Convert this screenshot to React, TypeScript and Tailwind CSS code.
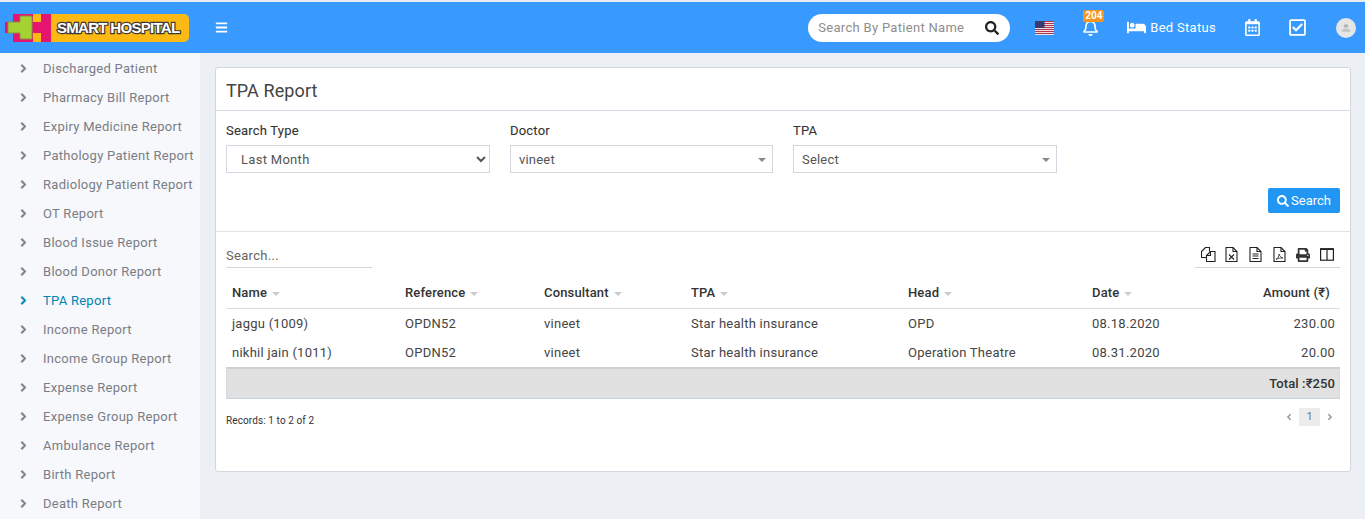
import { FaAngleLeft, FaAngleRight, FaBars, FaBed, FaChevronRight, FaPrint, FaRegBell, FaRegCalendarAlt, FaRegCheckSquare, FaSearch } from 'react-icons/fa';

const reports = [
  'Discharged Patient',
  'Pharmacy Bill Report',
  'Expiry Medicine Report',
  'Pathology Patient Report',
  'Radiology Patient Report',
  'OT Report',
  'Blood Issue Report',
  'Blood Donor Report',
  'TPA Report',
  'Income Report',
  'Income Group Report',
  'Expense Report',
  'Expense Group Report',
  'Ambulance Report',
  'Birth Report',
  'Death Report',
];

const columns = [
  { label: 'Name', width: 'w-[173px]' },
  { label: 'Reference', width: 'w-[139px]' },
  { label: 'Consultant', width: 'w-[147px]' },
  { label: 'TPA', width: 'w-[217px]' },
  { label: 'Head', width: 'w-[184px]' },
  { label: 'Date', width: 'w-[120px]' },
];

const rows = [
  ['jaggu (1009)', 'OPDN52', 'vineet', 'Star health insurance', 'OPD', '08.18.2020', '230.00'],
  ['nikhil jain (1011)', 'OPDN52', 'vineet', 'Star health insurance', 'Operation Theatre', '08.31.2020', '20.00'],
];

function DocIcon({ children }: { children?: React.ReactNode }) {
  return (
    <svg width="13" height="15" viewBox="0 0 13 15" fill="none" stroke="#222" strokeWidth="1.100">
      <path d="M1 .5h7l4 4v10H1z" />
      <path d="M8 .5v4h4" />
      {children}
    </svg>
  );
}

function CopyIcon() {
  return (
    <svg width="15" height="15" viewBox="0 0 15 15" fill="none" stroke="#222" strokeWidth="1.100">
      <path d="M4.500 .5h4v4M4.500 .5l-4 4v6h5" />
      <path d="M5.500 8.500l4-4h4.500v10h-8.500z" />
      <path d="M9.500 4.500v4h-4" />
    </svg>
  );
}

function ColumnsIcon() {
  return (
    <svg width="14" height="13" viewBox="0 0 14 13" fill="none" stroke="#222" strokeWidth="1.200">
      <rect x=".6" y=".8" width="12.800" height="11.400" />
      <path d="M7 1v11" />
      <path d="M.6 1.200h12.800" strokeWidth="1.600" />
    </svg>
  );
}

const toolbar = [
  <CopyIcon key="copy" />,
  <DocIcon key="excel">
    <path d="M4 7.500l5 5M9 7.500l-5 5" />
  </DocIcon>,
  <DocIcon key="csv">
    <path d="M3.500 7h6M3.500 9h6M3.500 11.500h6" />
  </DocIcon>,
  <DocIcon key="pdf">
    <path d="M3 12.500c2-1 3-3.500 3-5.500 .5 2 2 3.500 4 4-2.500-.2-5 .3-7 1.500z" strokeWidth=".8" />
  </DocIcon>,
  <FaPrint key="print" className="text-[14px] text-[#333]" />,
  <ColumnsIcon key="columns" />,
];

function Logo() {
  return (
    <div className="flex h-[28px] w-[184px] items-center">
      <svg width="46" height="28" viewBox="0 0 46 28" className="shrink-0">
        <rect x="8" y="0" width="38" height="28" fill="#e5146f" />
        <rect x="0" y="8" width="8" height="11" fill="#e5146f" />
        <path d="M15 2h12v23H15v-6H3V8h12z" fill="#a4d233" stroke="#8a8f3a" strokeWidth="1" />
        <rect x="28" y="0" width="8" height="8" fill="#fdb913" />
        <rect x="28" y="19" width="8" height="9" fill="#fdb913" />
      </svg>
      <div className="flex h-[28px] flex-1 items-center rounded-r-[5px] bg-[#fdb913] pl-[6px] text-[15px] font-bold leading-none tracking-[-0.7px] whitespace-nowrap text-white [font-family:'Liberation_Sans',sans-serif] [-webkit-text-stroke:2.4px_#3a3a3a] [paint-order:stroke_fill]">
        SMART HOSPITAL
      </div>
    </div>
  );
}

function Flag() {
  return (
    <svg width="19" height="14" viewBox="0 0 19 14">
      <rect width="19" height="14" fill="#f4f4f8" />
      {[0, 2, 4, 6, 8, 10, 12].map((y) => (
        <rect key={y} y={y} width="19" height="1.100" fill="#b4354a" />
      ))}
      <rect width="9.500" height="7" fill="#3a3a6e" />
    </svg>
  );
}

function Caret({ className }: { className: string }) {
  return <span className={`inline-block h-0 w-0 border-x-[4px] border-t-[4px] border-x-transparent ${className}`} />;
}

function Select2({ value, width }: { value: string; width: string }) {
  return (
    <div className={`flex h-[28px] ${width} items-center justify-between border border-[#d2d6de] bg-white pt-[1px] pr-[6px] pl-[8px] text-[13px] tracking-[0.2px] text-[#555]`}>
      {value}
      <Caret className="border-t-[#888]" />
    </div>
  );
}

export default function App() {
  return (
    <div className="h-[519px] overflow-hidden bg-[#ecf0f5] text-[13px] text-[#444] [font-family:Roboto,sans-serif]">
      <div className="h-[2px] bg-[#e8ecf2]" />

      {/* Header */}
      <header className="flex h-[51px] items-center bg-[#3899ff] text-white">
        <div className="ml-[5px] w-[210px]">
          <Logo />
        </div>
        <FaBars className="text-[13px]" />
        <div className="ml-auto flex items-center">
          <div className="flex h-[28px] w-[202px] items-center justify-between rounded-full bg-white pr-[11px] pl-[10px]">
            <span className="text-[13px] tracking-[0.3px] text-[#8e8e8e]">Search By Patient Name</span>
            <FaSearch className="text-[14px] text-[#222]" />
          </div>
          <div className="ml-[25px]">
            <Flag />
          </div>
          <div className="relative ml-[28px]">
            <FaRegBell className="text-[17px]" />
            <span className="absolute top-[-9px] left-[1px] rounded-[2px] bg-[#f7941d] px-[2px] text-[10px] leading-[12px] font-bold">204</span>
          </div>
          <div className="ml-[28px] flex items-center gap-[4px]">
            <FaBed className="text-[19px]" />
            <span className="text-[13px] tracking-[0.3px]">Bed Status</span>
          </div>
          <FaRegCalendarAlt className="ml-[28px] text-[17px]" />
          <FaRegCheckSquare className="ml-[27px] text-[19px]" />
          <div className="mr-[9px] ml-[29px] flex h-[20px] w-[20px] items-center justify-center rounded-full bg-[#e6e6e6]">
            <svg width="12" height="12" viewBox="0 0 11 11">
              <path d="M3.500 5V3l2-1.500 2 1.500v2z" fill="#b5b5b5" />
              <path d="M1 9c1-2 2.500-3 4.500-3s3.500 1 4.500 3z" fill="#c4c4c4" />
            </svg>
          </div>
        </div>
      </header>

      <div className="flex">
        {/* Sidebar */}
        <aside className="h-[466px] w-[200px] shrink-0 bg-[#f7f8fb]">
          <ul className="pt-[1px]">
            {reports.map((item) => (
              <li
                key={item}
                className={`flex h-[29px] items-center whitespace-nowrap ${item === 'TPA Report' ? 'text-[#0084b4]' : 'text-[#7a7d85]'}`}
              >
                <FaChevronRight className="ml-[19px] w-[9px] text-[9px]" stroke="currentColor" strokeWidth={50} />
                <span className="ml-[15px] tracking-[0.28px]">{item}</span>
              </li>
            ))}
          </ul>
        </aside>

        {/* Main */}
        <main className="flex-1 pt-[14px] pr-[14px] pl-[15px]">
          <section className="h-[405px] rounded-[3px] border border-[#d2d6de] bg-white">
            <div className="flex h-[43px] items-center border-b border-[#d2dbe4] px-[10px] pt-[2px]">
              <h1 className="text-[18px] tracking-[0.1px] text-[#444]">TPA Report</h1>
            </div>

            <div className="border-b border-[#e3e3e3] px-[10px] pt-[12px]">
              <div className="flex gap-[20px]">
                <div>
                  <label className="mb-[6px] block leading-[16px] tracking-[0.2px] text-[#333] [-webkit-text-stroke:0.1px_#333]">Search Type</label>
                  <select className="h-[28px] w-[264px] border border-[#d2d6de] bg-white pl-[10px] text-[13px] tracking-[0.3px] text-[#555]" defaultValue="Last Month">
                    <option>Last Month</option>
                  </select>
                </div>
                <div>
                  <label className="mb-[6px] block leading-[16px] tracking-[0.2px] text-[#333] [-webkit-text-stroke:0.1px_#333]">Doctor</label>
                  <Select2 value="vineet" width="w-[263px]" />
                </div>
                <div>
                  <label className="mb-[6px] block leading-[16px] tracking-[0.2px] text-[#333] [-webkit-text-stroke:0.1px_#333]">TPA</label>
                  <Select2 value="Select" width="w-[264px]" />
                </div>
              </div>
              <div className="mt-[15px] flex justify-end pb-[18px]">
                <button className="flex h-[25px] w-[72px] items-center justify-center gap-[2px] rounded-[2px] bg-[#2196f3] text-[13px] text-white">
                  <FaSearch className="text-[12px]" />
                  Search
                </button>
              </div>
            </div>

            <div className="px-[10px]">
              <div className="flex h-[36px] items-end justify-between">
                <div className="w-[146px] border-b border-[#d5d5d5] pb-[2px] text-[13px] tracking-[0.3px] text-[#666]">Search...</div>
                <div className="flex w-[145px] items-center justify-end border-b border-[#d5d5d5] pr-[1px] pb-[5px]">
                  {toolbar.map((icon, i) => (
                    <span key={i} className="flex w-[23.800px] justify-center">
                      {icon}
                    </span>
                  ))}
                </div>
              </div>

              <table className="mt-[10px] w-full table-fixed border-separate border-spacing-0 leading-[19px]">
                <thead>
                  <tr className="text-left">
                    {columns.map((col) => (
                      <th key={col.label} className={`${col.width} h-[31px] border-b border-[#dcdcdc] px-[6px] pb-[1px] font-medium tracking-[0.15px] text-[#333]`}>
                        {col.label}
                        <Caret className="ml-[5px] align-middle border-t-[#ccc]" />
                      </th>
                    ))}
                    <th className="h-[31px] border-b border-[#dcdcdc] pr-[10px] pb-[1px] text-right font-medium tracking-[0.2px] text-[#333]">Amount (₹)</th>
                  </tr>
                </thead>
                <tbody>
                  {rows.map((row) => (
                    <tr key={row[0]}>
                      {row.map((cell, i) => (
                        <td key={i} className={`h-[29px] px-[6px] tracking-[0.25px] text-[#444] ${i === 6 ? 'pr-[5px] text-right' : ''}`}>
                          {cell}
                        </td>
                      ))}
                    </tr>
                  ))}
                  <tr>
                    <td colSpan={7} className="h-[32px] border border-t-2 border-t-[#d0d0d0] border-x-[#d3dbe1] border-b-[#c8d4dc] bg-[#e1e1e1] pr-[4px] text-right font-medium tracking-[0.1px] text-[#333]">
                      Total :₹250
                    </td>
                  </tr>
                </tbody>
              </table>

              <div className="mt-[9px] flex items-start justify-between">
                <span className="mt-[5px] text-[10px] tracking-[0.1px] text-[#333]">Records: 1 to 2 of 2</span>
                <div className="flex items-center gap-[5px] pr-[5px] text-[11px] text-[#777]">
                  <FaAngleLeft className="text-[10px] text-[#999]" />
                  <span className="flex h-[18px] w-[21px] items-center justify-center bg-[#ececec]">1</span>
                  <FaAngleRight className="text-[10px] text-[#999]" />
                </div>
              </div>
            </div>
          </section>
        </main>
      </div>
    </div>
  );
}
